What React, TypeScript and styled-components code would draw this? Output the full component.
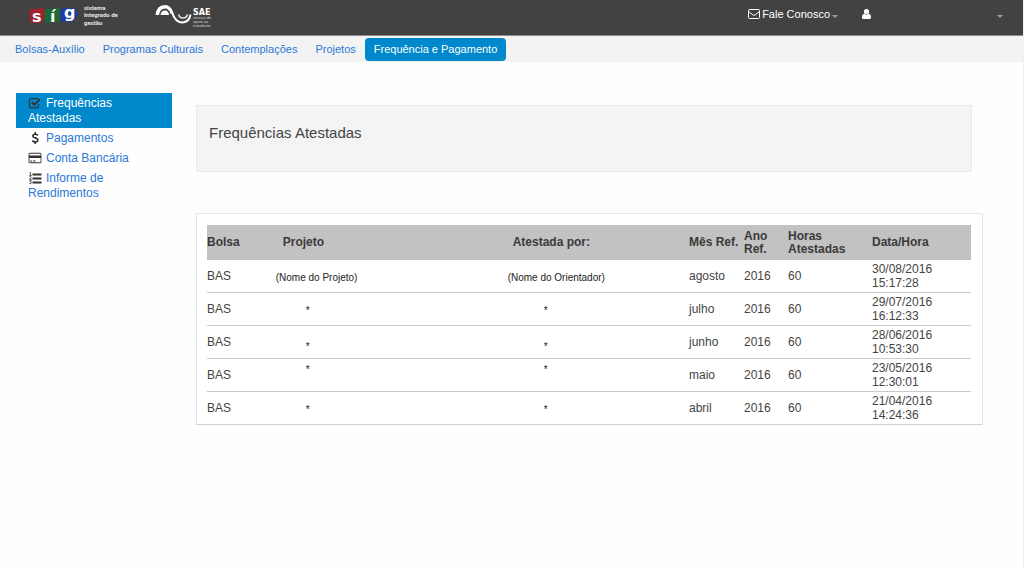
import React from "react";
import styled, { createGlobalStyle, css } from "styled-components";

const GlobalStyle = createGlobalStyle`
  *, *::before, *::after { box-sizing: border-box; }
  body {
    margin: 0;
    background: #fefefe;
    color: #444;
    font-family: "Liberation Sans", Arial, sans-serif;
    font-size: 12px;
    line-height: 15px;
  }
`;

const Page = styled.div`
  min-height: 100vh;
  border-right: 1px solid #f1f1f1;
`;

const TopBar = styled.header`
  display: flex;
  align-items: flex-start;
  height: 36px;
  padding: 0 20px 0 28px;
  background: #424242;
  border-bottom: 1px solid #8c8c8c;
`;

const Brand = styled.a`
  display: block;
  height: 30px;
  margin-right: 32px;
`;

const TopActions = styled.div`
  display: flex;
  align-items: center;
  height: 28px;
  margin-left: auto;
`;

const TopButton = styled.button<{ $gap?: boolean }>`
  display: flex;
  align-items: center;
  gap: 2px;
  padding: 0;
  border: 0;
  background: none;
  color: #fff;
  font: inherit;
  font-size: 11px;
  margin-left: ${(p) => (p.$gap ? "24px" : "0")};
`;

const AccountButton = styled(TopButton)`
  width: 141px;
  justify-content: space-between;
`;

const Caret = styled.span`
  border: 3px solid transparent;
  border-top-color: #a0a0a0;
  border-bottom: 0;
  margin-top: 4px;
`;

const Nav = styled.nav`
  display: flex;
  align-items: center;
  height: 26px;
  padding: 0 6px;
  background: #f3f3f3;
`;

const NavLink = styled.a<{ $active?: boolean }>`
  padding: 4px 9px;
  border-radius: 4px;
  color: #2b78d6;
  font-size: 11px;
  text-decoration: none;
  ${(p) =>
    p.$active &&
    css`
      background: #0088cc;
      color: #fff;
    `}
`;

const Content = styled.div`
  display: flex;
  gap: 24px;
  padding: 31px 40px 32px 16px;
`;

const Sidebar = styled.nav`
  flex: 0 0 156px;
`;

const SideLink = styled.a<{ $active?: boolean }>`
  display: block;
  padding: 3px 40px 2px 12px;
  color: ${(p) => (p.$active ? "#fff" : "#2b78d6")};
  background: ${(p) => (p.$active ? "#0088cc" : "transparent")};
  text-decoration: none;

  svg {
    margin-right: 4px;
    vertical-align: -2px;
  }
`;

const Main = styled.main`
  flex: 1;
  min-width: 0;
  padding-top: 12px;
`;

const TitlePanel = styled.section`
  height: 67px;
  margin: 0 11px 41px 0;
  padding: 17px 12px;
  background: #f4f4f4;
  border: 1px solid #e9e9e9;
`;

const Title = styled.h1`
  margin: 0;
  font-size: 15px;
  font-weight: 400;
  line-height: 20px;
`;

const TablePanel = styled.section`
  padding: 11px 11px 0 10px;
  background: #fff;
  border: 1px solid #e6e6e6;
  border-bottom-color: #cfcfcf;
`;

const Table = styled.table`
  width: 100%;
  table-layout: fixed;
  border-collapse: separate;
  border-spacing: 0;
  line-height: 14px;
`;

const Th = styled.th<{ $indent?: number }>`
  height: 35px;
  padding: 0 0 0 ${(p) => p.$indent ?? 0}px;
  background: #c2c2c2;
  color: #3a3a3a;
  font-weight: 700;
  line-height: 13px;
  text-align: left;
`;

const Td = styled.td`
  padding: 2px 0;
  border-bottom: 1px solid #cbcbcb;

  tr:last-child > & {
    border-bottom: 0;
  }
`;

const NoteTd = styled(Td)<{ $indent?: number; $align?: string }>`
  padding: 4px 0 ${(p) => (p.$align === "bottom" ? 4 : 0)}px ${(p) => p.$indent ?? 0}px;
  color: #222;
  font-size: 10px;
  vertical-align: ${(p) => p.$align ?? "middle"};
`;

const DateTd = styled(Td)`
  padding-right: 32px;
`;

const SigLogo = () => (
  <svg width="95" height="30" viewBox="0 0 95 30" role="img" aria-label="sig">
    <path d="M1 12 Q2 9 6 9 L14 8 Q18 9 17 13 L15 21 Q13 24 9 23 L4 23 Q1 21 2 17Z" fill="#a3202f" />
    <path d="M16 11 Q19 8 23 9 L31 8 Q34 11 32 15 L32 20 Q29 24 25 22 L18 23 Q15 20 17 16Z" fill="#1e6a36" />
    <path d="M32 12 Q33 8 37 8 L46 8 Q50 10 50 15 L46 20 Q44 23 40 22 L35 22 Q31 21 32 17Z" fill="#1c3d9c" />
    <g fill="#fff" fontFamily="DejaVu Sans, sans-serif" fontWeight="700" fontSize="16">
      <text x="4" y="22">s</text>
      <text x="22" y="22">í</text>
      <text x="36" y="18">g</text>
    </g>
    <g fill="#e6e6e6" fontFamily="Roboto, sans-serif" fontWeight="700" fontSize="6">
      <text x="56" y="10">sistema</text>
      <text x="56" y="17">integrado de</text>
      <text x="56" y="25">gestão</text>
    </g>
  </svg>
);

const SaeLogo = () => (
  <svg width="60" height="30" viewBox="0 0 60 30" role="img" aria-label="SAE">
    <path d="M10 6.500 Q15 6.500 17 12 Q20 22.500 27.500 22.500 Q34.500 22 35.500 14.500" fill="none" stroke="#fff" strokeWidth="2" />
    <path d="M0.500 15 Q1.500 5 10 5 Q16 5 18.500 14 L15.500 14 Q14 8.500 10 8.500 Q5 8.500 4 15Z" fill="#fff" />
    <path d="M5.500 15 Q6 10.500 10 10.500 Q13.500 10.500 14 15Z" fill="#fff" />
    <path d="M23.500 14.500 Q24.500 18 28 18 Q31.500 18 32.500 14.500" fill="none" stroke="#e8e8e8" strokeWidth="1.500" />
    <text x="38" y="15" fill="#fff" fontFamily="DejaVu Sans, sans-serif" fontWeight="700" fontSize="8">SAE</text>
    <g fill="#d0d0d0" fontFamily="Liberation Sans, sans-serif" fontSize="4">
      <text x="38" y="19">serviço de</text>
      <text x="38" y="23">apoio ao</text>
      <text x="38" y="27">estudante</text>
    </g>
  </svg>
);

const EnvelopeIcon = () => (
  <svg width="12" height="10" viewBox="0 0 12 10" fill="none" stroke="#fff" aria-hidden="true">
    <rect x="0.500" y="0.500" width="11" height="9" rx="1" />
    <path d="M0.500 2.500 L5 6 Q6 6.800 7 6 L11.500 2.500" />
  </svg>
);

const UserIcon = () => (
  <svg width="9" height="10" viewBox="0 0 9 10" fill="#fff" aria-hidden="true">
    <circle cx="4.500" cy="2.700" r="2.600" />
    <path d="M2 4.700 Q4.500 7 7 4.700 Q9 5.200 9 8.500 Q9 10 7.500 10 H1.500 Q0 10 0 8.500 Q0 5.200 2 4.700Z" />
  </svg>
);

const CheckIcon = () => (
  <svg width="14" height="12" viewBox="0 0 14 12" fill="none" stroke="#333" aria-hidden="true">
    <path d="M10.500 7 V9 Q10.500 10.800 8.800 10.800 H3.300 Q1.500 10.800 1.500 9 V3.500 Q1.500 1.700 3.300 1.700 H9.500" strokeWidth="1.200" />
    <path d="M3.800 5.300 L6.300 7.800 L11.800 2.300" strokeWidth="2" />
  </svg>
);

const DollarIcon = () => (
  <svg width="14" height="12" viewBox="0 0 14 12" fill="none" stroke="#333" aria-hidden="true">
    <path d="M10 3.300 Q8.800 2.200 7.200 2.200 Q4.800 2.200 4.800 3.900 Q4.800 5.300 7.200 5.900 Q9.800 6.500 9.800 8.200 Q9.800 9.900 7.300 9.900 Q5.500 9.900 4.200 8.600" strokeWidth="1.600" />
    <path d="M7.200 0 V2.500 M7.200 9.500 V12" strokeWidth="1.500" />
  </svg>
);

const CardIcon = () => (
  <svg width="14" height="12" viewBox="0 0 1920 1792" fill="#333" aria-hidden="true">
    <path d="M1760 128q66 0 113 47t47 113v1216q0 66-47 113t-113 47h-1600q-66 0-113-47t-47-113v-1216q0-66 47-113t113-47h1600zm-1600 128q-13 0-22.500 9.500t-9.500 22.500v224h1664v-224q0-13-9.500-22.500t-22.500-9.500h-1600zm1600 1280q13 0 22.500-9.500t9.500-22.500v-608h-1664v608q0 13 9.500 22.500t22.500 9.500h1600zm-1504-128v-128h256v128h-256zm384 0v-128h384v128h-384z" />
  </svg>
);

const ListIcon = () => (
  <svg width="14" height="12" viewBox="0 0 14 12" fill="none" stroke="#333" aria-hidden="true">
    <path d="M4.500 2.500 H13.500 M4.500 6.500 H13.500 M4.500 10.500 H13.500" strokeWidth="1.800" />
    <path d="M1.500 0.800 L2.500 0.300 V3.300 M1.300 3.500 H3.700 M1.300 4.800 Q3.500 4.300 3.200 5.500 L1.400 7.400 H3.700 M1.300 8.700 H3.400 L2.300 10 Q3.700 10.200 3.300 11.200 Q2.500 12 1.200 11.300" strokeWidth="0.800" />
  </svg>
);

const navItems = ["Bolsas-Auxílio", "Programas Culturais", "Contemplações", "Projetos", "Frequência e Pagamento"];

const sideItems = [
  { label: "Frequências Atestadas", Icon: CheckIcon },
  { label: "Pagamentos", Icon: DollarIcon },
  { label: "Conta Bancária", Icon: CardIcon },
  { label: "Informe de Rendimentos", Icon: ListIcon },
];

const rows = [
  { project: "(Nome do Projeto)", advisor: "(Nome do Orientador)", month: "agosto", date: "30/08/2016 15:17:28" },
  { project: "*", advisor: "*", month: "julho", date: "29/07/2016 16:12:33" },
  { project: "*", advisor: "*", month: "junho", date: "28/06/2016 10:53:30", align: "bottom" },
  { project: "*", advisor: "*", month: "maio", date: "23/05/2016 12:30:01", align: "top" },
  { project: "*", advisor: "*", month: "abril", date: "21/04/2016 14:24:36" },
];

export default function App() {
  return (
    <Page>
      <GlobalStyle />
      <TopBar>
        <Brand href="#"><SigLogo /></Brand>
        <Brand href="#"><SaeLogo /></Brand>
        <TopActions>
          <TopButton type="button">
            <EnvelopeIcon />
            Fale Conosco
            <Caret />
          </TopButton>
          <AccountButton type="button" $gap aria-label="Conta">
            <UserIcon />
            <Caret />
          </AccountButton>
        </TopActions>
      </TopBar>
      <Nav>
        {navItems.map((label, i) => (
          <NavLink key={label} href="#" $active={i === 4}>{label}</NavLink>
        ))}
      </Nav>
      <Content>
        <Sidebar>
          {sideItems.map(({ label, Icon }, i) => (
            <SideLink key={label} href="#" $active={i === 0}>
              <Icon />
              {label}
            </SideLink>
          ))}
        </Sidebar>
        <Main>
          <TitlePanel>
            <Title>Frequências Atestadas</Title>
          </TitlePanel>
          <TablePanel>
            <Table>
              <colgroup>
                <col style={{ width: "9%" }} />
                <col />
                <col style={{ width: "24%" }} />
                <col style={{ width: 55 }} />
                <col style={{ width: 44 }} />
                <col style={{ width: 84 }} />
                <col style={{ width: 99 }} />
              </colgroup>
              <thead>
                <tr>
                  <Th>Bolsa</Th>
                  <Th $indent={7}>Projeto</Th>
                  <Th $indent={7}>Atestada por:</Th>
                  <Th>Mês Ref.</Th>
                  <Th>Ano Ref.</Th>
                  <Th>Horas Atestadas</Th>
                  <Th>Data/Hora</Th>
                </tr>
              </thead>
              <tbody>
                {rows.map((r) => (
                  <tr key={r.date}>
                    <Td>BAS</Td>
                    <NoteTd $indent={r.project === "*" ? 30 : 0} $align={r.align}>{r.project}</NoteTd>
                    <NoteTd $indent={r.advisor === "*" ? 38 : 2} $align={r.align}>{r.advisor}</NoteTd>
                    <Td>{r.month}</Td>
                    <Td>2016</Td>
                    <Td>60</Td>
                    <DateTd>{r.date}</DateTd>
                  </tr>
                ))}
              </tbody>
            </Table>
          </TablePanel>
        </Main>
      </Content>
    </Page>
  );
}
